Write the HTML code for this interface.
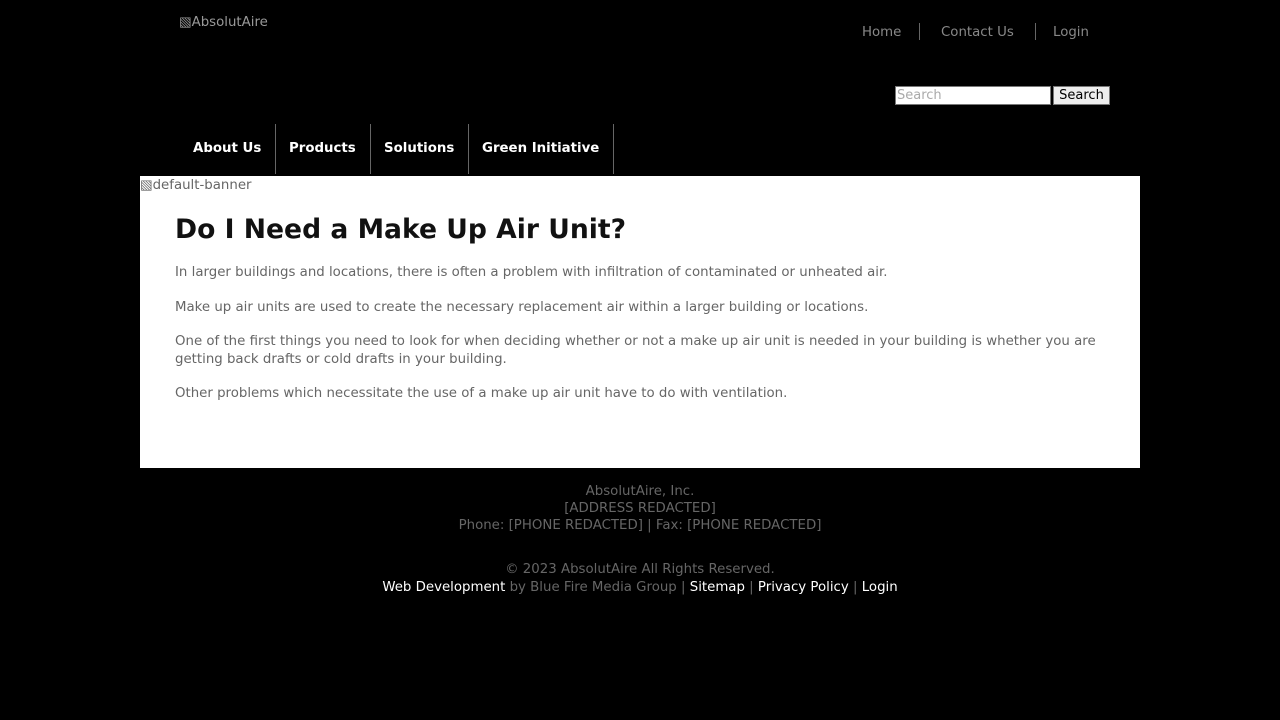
<!DOCTYPE html>
<html><head><style>
body{margin:0;background:#000;font-family:"DejaVu Sans",sans-serif;width:1280px;height:720px;position:relative;overflow:hidden}
.a{position:absolute;white-space:nowrap}
.top{font-size:13.33px;color:#888}
.sep{position:absolute;width:1px;background:#666}
.nav{font-size:13.33px;font-weight:bold;color:#fff}
.main{position:absolute;left:140px;top:176px;width:1000px;height:292px;background:#fff}
.p{font-size:13.33px;color:#666;left:35px;width:930px;white-space:normal;line-height:18px}
.f{font-size:13.33px;color:#666;left:0;width:1280px;text-align:center}
.f a{color:#fff;text-decoration:none}
</style></head><body>
<div class="a top" style="left:179px;top:15px;color:#999">▧AbsolutAire</div>
<div class="a top" style="left:862px;top:25px">Home</div>
<div class="sep" style="left:919px;top:23px;height:17px"></div>
<div class="a top" style="left:941px;top:25px">Contact Us</div>
<div class="sep" style="left:1035px;top:23px;height:17px"></div>
<div class="a top" style="left:1053px;top:25px">Login</div>
<div class="a" style="left:895px;top:86px;width:153px;height:17px;background:#fff;border:1px solid #777;font-size:13px;color:#aaa;line-height:17px;padding-left:1px">Search</div>
<div class="a" style="left:1053px;top:86px;width:55px;height:17px;background:#eee;border:1px solid #777;font-size:13px;color:#000;line-height:17px;text-align:center">Search</div>
<div class="a nav" style="left:193px;top:141px">About Us</div>
<div class="sep" style="left:275px;top:124px;height:50px"></div>
<div class="a nav" style="left:289px;top:141px">Products</div>
<div class="sep" style="left:370px;top:124px;height:50px"></div>
<div class="a nav" style="left:384px;top:141px">Solutions</div>
<div class="sep" style="left:468px;top:124px;height:50px"></div>
<div class="a nav" style="left:482px;top:141px">Green Initiative</div>
<div class="sep" style="left:613px;top:124px;height:50px"></div>
<div class="main">
<div class="a" style="left:0;top:2px;font-size:13.33px;color:#666">▧default-banner</div>
<div class="a" style="left:35px;top:38px;font-size:26.6px;font-weight:bold;color:#111">Do I Need a Make Up Air Unit?</div>
<div class="a p" style="top:88px">In larger buildings and locations, there is often a problem with infiltration of contaminated or unheated air.</div>
<div class="a p" style="top:123px">Make up air units are used to create the necessary replacement air within a larger building or locations.</div>
<div class="a p" style="top:157px">One of the first things you need to look for when deciding whether or not a make up air unit is needed in your building is whether you are getting back drafts or cold drafts in your building.</div>
<div class="a p" style="top:209px">Other problems which necessitate the use of a make up air unit have to do with ventilation.</div>
</div>
<div class="a f" style="top:484px">AbsolutAire, Inc.</div>
<div class="a f" style="top:501px">[ADDRESS REDACTED]</div>
<div class="a f" style="top:518px">Phone: [PHONE REDACTED] | Fax: [PHONE REDACTED]</div>
<div class="a f" style="top:562px">© 2023 AbsolutAire All Rights Reserved.</div>
<div class="a f" style="top:580px"><a>Web Development</a> by Blue Fire Media Group | <a>Sitemap</a> | <a>Privacy Policy</a> | <a>Login</a></div>
</body></html>
